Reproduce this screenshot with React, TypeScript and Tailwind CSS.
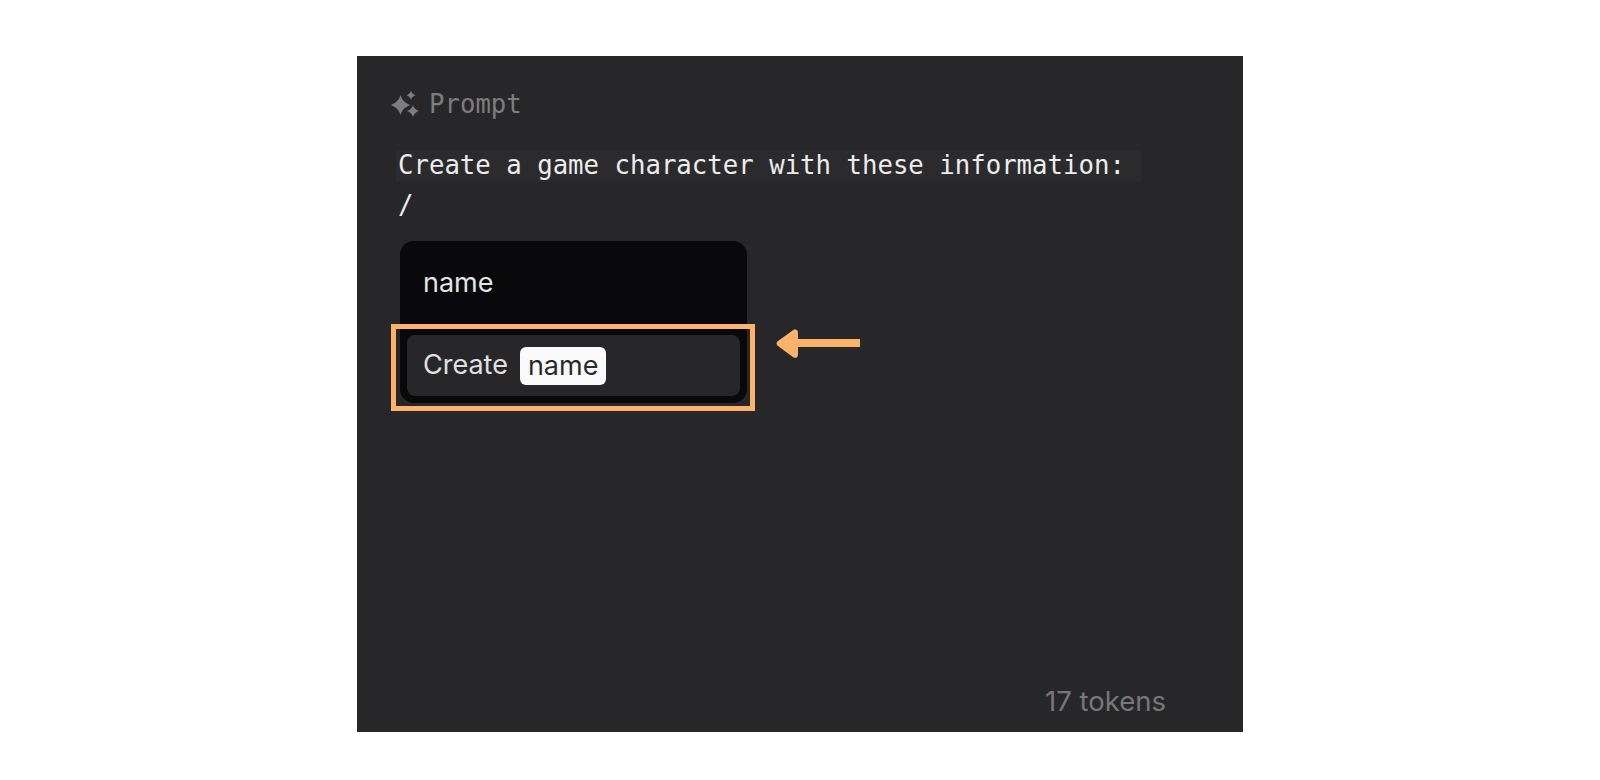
const mono = { fontFamily: '"DejaVu Sans Mono", monospace' };

const SparkleIcon = () => (
  <svg width="30" height="28" viewBox="0 0 30 28" fill="#7d7d7d">
    <path d="M10.5 5 C12 10 14.5 12.5 20 15 C14.5 17.5 12 20 10.5 25 C9 20 6.5 17.5 1 15 C6.5 12.5 9 10 10.5 5Z" />
    <path d="M21 0.5 C21.8 3 23 4.2 25.5 5.2 C23 6.2 21.8 7.4 21 10 C20.2 7.4 19 6.2 16.5 5.2 C19 4.2 20.2 3 21 0.5Z" />
    <path d="M23 15 C24 18 25.4 19.6 29 21 C25.4 22.4 24 24 23 27 C22 24 20.6 22.4 17 21 C20.6 19.6 22 18 23 15Z" />
  </svg>
);

const ArrowLeft = () => (
  <svg width="84" height="30" viewBox="0 0 84 30" fill="#fbb26a">
    <rect x="14" y="10" width="70" height="8" />
    <path d="M18 0.5 C21 0 22 1.5 22 4 L22 25 C22 28.5 20 29.5 17.5 28.5 L2 17 C0 15.5 0 13.5 2 12 Z" />
  </svg>
);

export default function App() {
  return (
    <div className="min-h-[780px] bg-white pt-[56px] font-['Inter',sans-serif]">
      <div className="mx-auto flex h-[676px] w-[886px] flex-col bg-[#272729] pb-[16px] pl-[33px] pr-[77px] pt-[33px]">
        <div className="flex h-[30px] items-center gap-[9px]">
          <SparkleIcon />
          <span className="text-[25.7px] leading-[30px] text-[#7d7d7d]" style={mono}>
            Prompt
          </span>
        </div>

        <div className="mt-[31px] pl-[6px] text-[25.7px] text-[#ececec]" style={mono}>
          <p className="h-[32px] w-[745px] bg-[#2b2b2d] px-[2px] leading-[31px]">
            Create a game character with these information:
          </p>
          <p className="mt-[7px] px-[2px] leading-[32px]">/</p>
        </div>

        <div className="relative ml-[10px] mt-[20px] h-[162px] w-[347px] rounded-[14px] bg-[#09090b] text-[27px]">
          <div className="flex h-[84px] items-center pl-[23px] text-[#e4e4e4]">name</div>
          <div className="mx-[7px] mt-[10px] flex h-[61px] items-center gap-[12px] rounded-[8px] bg-[#272729] pl-[16px] text-[#e0e0e0]">
            <span>Create</span>
            <span className="rounded-[6px] bg-[#fafafa] px-[8px] leading-[38px] text-[#2a2a2c]">name</span>
          </div>

          {/* highlight annotation on top of the menu */}
          <div className="absolute left-[-9px] top-[83px] h-[87px] w-[364px] border-[5px] border-[#fbb26a]" />
          <div className="absolute left-[376px] top-[88px]">
            <ArrowLeft />
          </div>
        </div>

        <div className="mt-auto text-right text-[27.5px] leading-[30px] text-[#77777a]">17 tokens</div>
      </div>
    </div>
  );
}
